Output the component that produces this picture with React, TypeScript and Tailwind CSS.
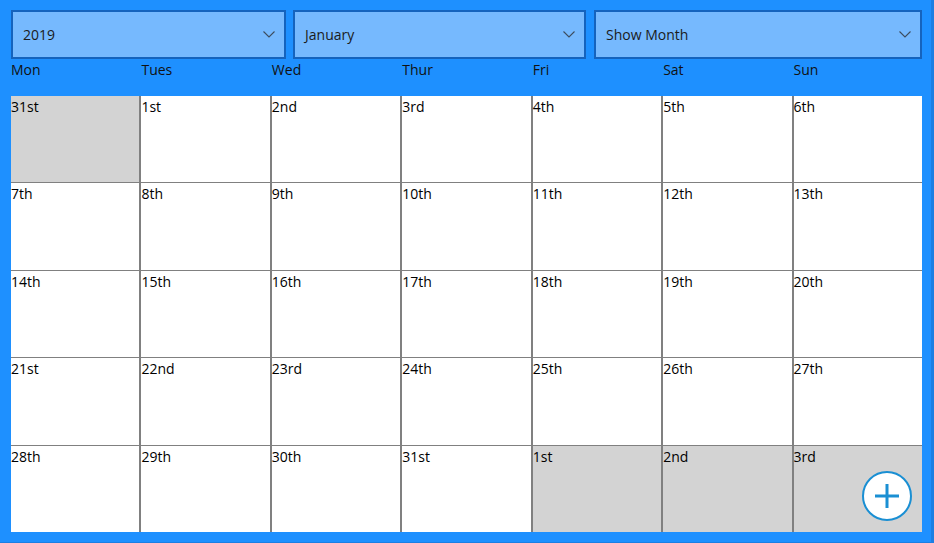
const days = ['Mon', 'Tues', 'Wed', 'Thur', 'Fri', 'Sat', 'Sun'];

type Cell = { label: string; muted: boolean };

const ord = (n: number) => {
    if (n % 10 === 1 && n !== 11) return `${n}st`;
    if (n % 10 === 2 && n !== 12) return `${n}nd`;
    if (n % 10 === 3 && n !== 13) return `${n}rd`;
    return `${n}th`;
};

const cells: Cell[] = [
    { label: '31st', muted: true },
    ...Array.from({ length: 31 }, (_, i) => ({ label: ord(i + 1), muted: false })),
    { label: '1st', muted: true },
    { label: '2nd', muted: true },
    { label: '3rd', muted: true },
];

function Select({ value, width }: { value: string; width: string }) {
    return (
        <div className={`${width} h-full flex items-center justify-between border-2 border-[#1563bd] bg-[#76b9fe] pl-[10px] pr-[8px] text-[14px] text-[#1b1b1b]`}>
            <span>{value}</span>
            <svg width="12" height="7" viewBox="0 0 12 7" className="mr-[1px]">
                <path d="M0.5 0.5L6 6L11.5 0.5" fill="none" stroke="#3d4c5e" strokeWidth="1.1" />
            </svg>
        </div>
    );
}

export default function App() {
    return (
        <div className="w-[934px] h-[543px] bg-[#1c7fe3] overflow-hidden" style={{ fontFamily: '"Open Sans", "Noto Sans", sans-serif' }}>
            <div className="w-[931px] h-[542px] bg-[#1e90ff] pl-[11px] pr-[9px] pt-[10px] pb-[10px] flex flex-col">
                {/* selectors */}
                <div className="flex h-[49px] gap-[7px]">
                    <Select value="2019" width="w-[275px]" />
                    <Select value="January" width="w-[293px]" />
                    <div className="flex-1 flex ml-[1px]">
                        <Select value="Show Month" width="flex-1" />
                    </div>
                </div>

                {/* day names */}
                <div className="grid grid-cols-7 gap-x-[2px] h-[37px] text-[14px] text-[#111]">
                    {days.map((d) => (
                        <div key={d}>{d}</div>
                    ))}
                </div>

                {/* month grid */}
                <div className="relative">
                    <div className="grid grid-cols-7 grid-rows-5 gap-x-[2px] gap-y-[1px] h-[436px] bg-[#808080]">
                        {cells.map((c, i) => (
                            <div key={i} className={`${c.muted ? 'bg-[#d3d3d3]' : 'bg-white'} text-[14px] text-black leading-[20px] pt-[1px]`}>
                                {c.label}
                            </div>
                        ))}
                    </div>
                    <button className="absolute right-[10px] bottom-[11px] w-[50px] h-[50px] rounded-full bg-white border-2 border-[#1a8fd3] flex items-center justify-center">
                        <svg width="28" height="28" viewBox="0 0 28 28">
                            <path d="M14 2v24M2 14h24" stroke="#1a8fd3" strokeWidth="3" />
                        </svg>
                    </button>
                </div>
            </div>
        </div>
    );
}
